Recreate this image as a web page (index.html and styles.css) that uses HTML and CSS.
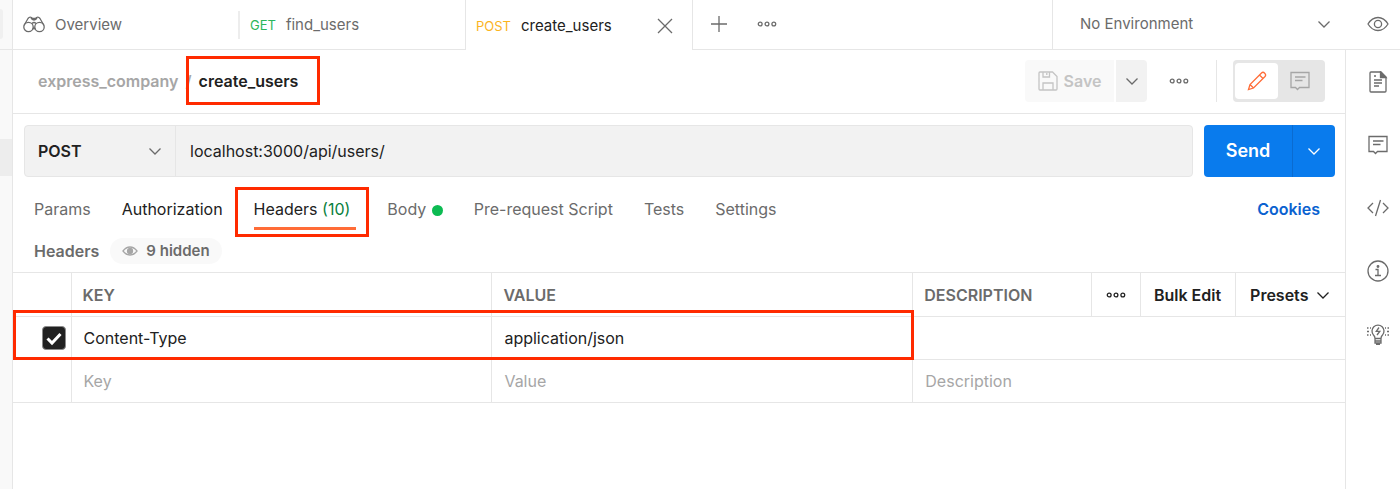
FILE: index.html
```html
<!DOCTYPE html>
<html lang="en">
	<head>
		<meta charset="UTF-8">
		<meta name="viewport" content="width=device-width, initial-scale=1">
		<title>create_users</title>
		<link rel="stylesheet" href="styles.css">
	</head>
	<body>
		<!-- shared icons -->
		<svg class="sprite" aria-hidden="true">
			<symbol id="chevron" viewBox="0 0 14 14">
				<path d="M1.500 4.500 7 10l5.500-5.500"/>
			</symbol>
			<symbol id="dots" viewBox="0 0 20 8">
				<circle cx="3.200" cy="4" r="1.900"/>
				<circle cx="10" cy="4" r="1.900"/>
				<circle cx="16.800" cy="4" r="1.900"/>
			</symbol>
			<symbol id="comment" viewBox="0 0 20 20">
				<path d="M1 1.500h18v15H9.500L7.500 18.500 5.500 16.500H1zM5 6h10.500M5 9.500h7.500"/>
			</symbol>
		</svg>

		<div class="edge">
			<div class="edge-top"><span class="edge-button"></span></div>
			<div class="edge-item"></div>
		</div>

		<div class="workspace">
			<header class="tabbar">
				<button class="tab">
					<svg class="icon" width="22" height="20" viewBox="0 0 22 20">
						<circle cx="5.500" cy="12" r="4.700"/>
						<circle cx="16.500" cy="12" r="4.700"/>
						<path d="M1 10.500 5 3.500Q6.500 1.500 8.500 2.500L9.500 3.500H12.500L13.500 2.500Q15.500 1.500 17 3.500L21 10.500M9 8.500Q11 6.500 13 8.500M8 3Q9 5 11 5T14 3M9.500 14.500 11 12.500 12.500 14.500"/>
					</svg>
					<span class="tab-name">Overview</span>
				</button>
				<span class="tab-divider"></span>
				<button class="tab">
					<span class="method get">GET</span>
					<span class="tab-name">find_users</span>
				</button>
				<div class="tab active">
					<button class="tab-label">
						<span class="method post">POST</span>
						<span class="tab-name">create_users</span>
					</button>
					<button class="icon-button" aria-label="Close tab">
						<svg class="icon" width="16" height="16" viewBox="0 0 16 16"><path d="M1 1l14 14M15 1 1 15"/></svg>
					</button>
				</div>
				<button class="icon-button add" aria-label="New tab">
					<svg class="icon" width="16" height="16" viewBox="0 0 16 16"><path d="M8 0v16M0 8h16"/></svg>
				</button>
				<button class="icon-button" aria-label="Tab options">
					<svg class="icon" width="20" height="8"><use href="#dots"/></svg>
				</button>
				<label class="picker environment">
					<select aria-label="Environment">
						<option>No Environment</option>
					</select>
					<svg class="icon" width="14" height="14"><use href="#chevron"/></svg>
				</label>
				<button class="icon-button eye" aria-label="Environment quick look">
					<svg class="icon" width="22" height="16" viewBox="0 0 22 16">
						<path d="M1 8Q5 1.500 11 1.500T21 8Q17 14.500 11 14.500T1 8z"/>
						<circle cx="11" cy="8" r="3.600"/>
					</svg>
				</button>
			</header>

			<div class="content">
				<main>
					<div class="title-row">
						<h1 class="breadcrumb">
							<a href="#">express_company</a>
							<span class="slash">/</span>
							<span class="marked current">create_users</span>
						</h1>
						<div class="save">
							<button class="save-button" disabled>
								<svg class="icon" width="20" height="20" viewBox="0 0 20 20">
									<path d="M2 1h12.500L19 5.500V18q0 1-1 1H2q-1 0-1-1V2q0-1 1-1zM5 1v5h6.500V1M8.800 2v2M5 19v-7h10v7"/>
								</svg>
								Save
							</button>
							<button class="save-more" aria-label="Save options">
								<svg class="icon" width="14" height="14"><use href="#chevron"/></svg>
							</button>
						</div>
						<button class="icon-button" aria-label="More actions">
							<svg class="icon" width="20" height="8"><use href="#dots"/></svg>
						</button>
						<div class="mode">
							<div class="mode-switch">
								<button class="on" aria-label="Edit">
									<svg class="icon" width="20" height="20" viewBox="0 0 20 20">
										<path d="M1.500 18.500 3 13.500 14.500 2Q16 .500 17.700 2.200T18 5.500L6.500 17zM3 13.500 6.500 17M12.500 4 16 7.500"/>
									</svg>
								</button>
								<button aria-label="Comments">
									<svg class="icon" width="20" height="20"><use href="#comment"/></svg>
								</button>
							</div>
						</div>
					</div>

					<div class="request-row">
						<div class="request">
							<label class="picker verb">
								<select aria-label="Method">
									<option>POST</option>
								</select>
								<svg class="icon" width="14" height="14"><use href="#chevron"/></svg>
							</label>
							<input class="url" aria-label="Request URL" value="localhost:3000/api/users/">
						</div>
						<div class="send">
							<button class="send-button">Send</button>
							<button class="send-more" aria-label="Send options">
								<svg class="icon" width="14" height="14"><use href="#chevron"/></svg>
							</button>
						</div>
					</div>

					<nav class="sections">
						<a href="#">Params</a>
						<a href="#" class="dark">Authorization</a>
						<a href="#" class="marked dark selected">Headers <span class="count">(10)</span></a>
						<a href="#">Body <span class="dot"></span></a>
						<a href="#">Pre-request Script</a>
						<a href="#">Tests</a>
						<a href="#">Settings</a>
						<a href="#" class="cookies">Cookies</a>
					</nav>

					<div class="headers-row">
						<h2>Headers</h2>
						<button class="pill">
							<svg class="icon" width="16" height="10" viewBox="0 0 16 10">
								<path d="M1 5Q4 1 8 1T15 5Q12 9 8 9T1 5z"/>
								<circle class="pupil" cx="8" cy="5" r="2.500"/>
							</svg>
							9 hidden
						</button>
					</div>

					<div class="table-wrap">
						<table>
							<colgroup>
								<col class="col-check">
								<col class="col-wide">
								<col class="col-wide">
								<col>
								<col class="col-dots">
								<col class="col-bulk">
								<col class="col-presets">
							</colgroup>
							<thead>
								<tr>
									<td></td>
									<th>KEY</th>
									<th>VALUE</th>
									<th>DESCRIPTION</th>
									<td><button class="icon-button" aria-label="Column options"><svg class="icon" width="20" height="8"><use href="#dots"/></svg></button></td>
									<td><button class="head-button">Bulk Edit</button></td>
									<td><button class="head-button">Presets <svg class="icon" width="14" height="14"><use href="#chevron"/></svg></button></td>
								</tr>
							</thead>
							<tbody>
								<tr>
									<td>
										<label class="check">
											<input type="checkbox" aria-label="Enable header" checked>
											<svg width="24" height="24" viewBox="0 0 24 24"><path d="M5.500 12.500 10 17 18.500 8"/></svg>
										</label>
									</td>
									<td><input aria-label="Key" value="Content-Type"></td>
									<td><input aria-label="Value" value="application/json"></td>
									<td colspan="4"><input aria-label="Description"></td>
								</tr>
								<tr>
									<td></td>
									<td><input aria-label="New key" placeholder="Key"></td>
									<td><input aria-label="New value" placeholder="Value"></td>
									<td colspan="4"><input aria-label="New description" placeholder="Description"></td>
								</tr>
							</tbody>
						</table>
						<div class="row-mark"></div>
					</div>
				</main>

				<aside class="rail">
					<button class="icon-button" aria-label="Documentation">
						<svg class="icon" width="22" height="22" viewBox="0 0 22 22">
							<path d="M4 1h10l5 5v14q0 1-1 1H4q-1 0-1-1V2q0-1 1-1zM7 5h2M7 9h8M7 12h8M7 15h5"/>
							<path class="solid" d="M13.500 1v5.500H19z"/>
						</svg>
					</button>
					<button class="icon-button" aria-label="Comments">
						<svg class="icon" width="20" height="20"><use href="#comment"/></svg>
					</button>
					<button class="icon-button" aria-label="Code snippet">
						<svg class="icon" width="22" height="18" viewBox="0 0 22 18"><path d="M6 4 1 9l5 5M16 4l5 5-5 5M13.500 1 8.500 17"/></svg>
					</button>
					<button class="icon-button" aria-label="Request details">
						<svg class="icon" width="22" height="22" viewBox="0 0 22 22">
							<circle cx="11" cy="11" r="10"/>
							<path d="M8.500 9.500H11V15.500M8 15.500h6"/>
							<circle class="solid" cx="11" cy="6.500" r=".8"/>
						</svg>
					</button>
					<button class="icon-button" aria-label="Tips">
						<svg class="icon" width="22" height="22" viewBox="0 0 22 22">
							<path d="M8 15.500Q8 13.500 6.500 12A6 6 0 1 1 15.500 12Q14 13.500 14 15.500zM8 15.500V20h6v-4.500M8 18h6M9 21.300h4M12 4.500 9.300 8.300h3.500L10 12"/>
							<path d="M0 5h1.500M3 5h1M0 8.500h2M0 12h1.500M3 12h1M20.500 5H22M18 5h1M20 8.500h2M20.500 12H22M18 12h1"/>
						</svg>
					</button>
				</aside>
			</div>
		</div>
	</body>
</html>
```
FILE: styles.css
```css
*, *::before, *::after {
	box-sizing: border-box;
}

html, body {
	margin: 0;
	padding: 0;
	height: 100%;
}

body {
	display: flex;
	background: #fff;
	color: #212121;
	font-family: Inter, "Liberation Sans", sans-serif;
	font-size: 16px;
	line-height: 20px;
}

button, input, select {
	margin: 0;
	padding: 0;
	border: 0;
	background: none;
	color: inherit;
	font: inherit;
}

button {
	display: flex;
	align-items: center;
	justify-content: center;
}

a {
	color: inherit;
	text-decoration: none;
}

.sprite {
	position: absolute;
	width: 0;
	height: 0;
}

.icon {
	flex: none;
	fill: none;
	stroke: currentColor;
	stroke-width: 1.3;
}

.icon .solid {
	fill: currentColor;
}

.icon-button {
	color: #6b6b6b;
}

/* select with its own arrow on top */
.picker {
	display: grid;
	align-items: center;
}

.picker > select,
.picker > .icon {
	grid-area: 1 / 1;
}

.picker > select {
	width: 100%;
	height: 100%;
	appearance: none;
}

.picker > .icon {
	justify-self: end;
	pointer-events: none;
}

/* left edge */
.edge {
	flex: none;
	width: 13px;
	background: #f9f9f9;
	border-right: 1px solid #e6e6e6;
}

.edge-top {
	height: 50px;
	padding-top: 9px;
	border-bottom: 1px solid #e6e6e6;
}

.edge-button {
	display: block;
	width: 3px;
	height: 30px;
	background: #f0f0f0;
	border-radius: 0 4px 4px 0;
}

.edge-item {
	height: 37px;
	margin-top: 89px;
	background: #ededed;
}

.workspace {
	display: flex;
	flex-direction: column;
	flex-grow: 1;
	min-width: 0;
}

/* tab bar */
.tabbar {
	display: flex;
	align-items: center;
	height: 50px;
	border-bottom: 1px solid #e6e6e6;
	color: #6b6b6b;
	font-size: 15px;
}

.tabbar > .icon-button {
	padding-bottom: 2px;
}

.tab {
	display: flex;
	align-items: center;
	justify-content: flex-start;
	gap: 10px;
	width: 225px;
	height: 50px;
	padding: 1px 10px 0;
}

.tab-divider {
	width: 2px;
	height: 28px;
	background: #ededed;
}

.tab.active {
	justify-content: space-between;
	width: 228px;
	padding-right: 19px;
	margin-bottom: -1px;
	background: #fff;
	border: solid #e6e6e6;
	border-width: 0 1px;
}

.tab-label {
	gap: 10px;
}

.active .tab-name {
	color: #212121;
}

.method {
	font-size: 13px;
}

.get {
	color: #2bb65b;
}

.post {
	color: #fbb41f;
}

.add {
	margin: 0 30px 0 18px;
}

.environment {
	width: 303px;
	height: 49px;
	margin-left: auto;
	padding: 0 24px 2px 27px;
	border-left: 1px solid #e6e6e6;
}

.eye {
	width: 45px;
}

.content {
	display: flex;
	flex-grow: 1;
}

main {
	flex-grow: 1;
	min-width: 0;
}

/* red annotation frames */
.marked {
	position: relative;
}

.marked::before {
	content: "";
	position: absolute;
	inset: -15px -22px -14px -13px;
	border: 3px solid #ff2a00;
}

.row-mark {
	position: absolute;
	top: 38px;
	left: 0;
	width: calc(63% + 62px);
	height: 50px;
	border: 3px solid #ff2a00;
	pointer-events: none;
}

/* title and actions */
.title-row {
	display: flex;
	align-items: center;
	height: 64px;
	padding: 0 20px 2px 25px;
	border-bottom: 1px solid #e6e6e6;
}

.breadcrumb {
	display: flex;
	gap: 7px;
	margin: 0 auto 0 0;
	color: #a6a6a6;
	font-size: 16px;
	font-weight: 600;
}

.current {
	color: #212121;
}

.save {
	display: flex;
	gap: 2px;
	height: 42px;
	margin-right: 22px;
}

.save-button {
	gap: 6px;
	width: 89px;
	background: #f9f9f9;
	border-radius: 4px 0 0 4px;
	color: #c4c4c4;
	font-weight: 600;
}

.save-more {
	width: 31px;
	background: #f2f2f2;
	border-radius: 0 4px 4px 0;
	color: #6b6b6b;
}

.mode {
	height: 42px;
	margin-left: 27px;
	padding-left: 16px;
	border-left: 1px solid #e6e6e6;
}

.mode-switch {
	display: flex;
	width: 92px;
	height: 42px;
	padding: 3px 4px 3px 2px;
	background: #e6e6e6;
	border-radius: 4px;
	color: #a6a6a6;
}

.mode-switch > button {
	flex: 1;
	border-radius: 4px;
}

.mode-switch > .on {
	background: #fff;
	color: #ff6c37;
}

/* method, url, send */
.request-row {
	display: flex;
	gap: 11px;
	height: 52px;
	margin: 11px 10px 0 11px;
}

.request {
	display: flex;
	flex-grow: 1;
	background: #f2f2f2;
	border: 1px solid #e6e6e6;
	border-radius: 4px;
}

.verb {
	width: 151px;
	padding: 0 13px;
	border-right: 1px solid #e6e6e6;
	font-weight: 600;
}

.verb > .icon {
	color: #6b6b6b;
}

.url {
	flex-grow: 1;
	padding: 0 14px;
}

.send {
	display: flex;
	color: #fff;
	background: #097bed;
	border-radius: 4px;
}

.send-button {
	width: 88px;
	font-size: 18px;
	font-weight: 600;
}

.send-more {
	width: 43px;
	border-left: 1px solid #0a6bd0;
}

/* request sections */
.sections {
	display: flex;
	gap: 31px;
	margin-top: 22px;
	padding: 0 25px 0 21px;
	color: #6b6b6b;
}

.dark {
	color: #212121;
}

.selected {
	padding-right: 6px;
}

.selected::before {
	inset: -12px -13px -18px -19px;
}

.selected::after {
	content: "";
	position: absolute;
	inset: auto 0 -11px;
	height: 3px;
	background: #ff6c37;
}

.count {
	color: #0a7f3d;
}

.dot {
	display: inline-block;
	width: 11px;
	height: 11px;
	margin-left: 1px;
	background: #0cbb52;
	border-radius: 50%;
	vertical-align: -1px;
}

.cookies {
	margin-left: auto;
	color: #0a62d0;
	font-weight: 600;
}

.headers-row {
	display: flex;
	align-items: center;
	gap: 11px;
	height: 26px;
	margin: 19px 0 8px 21px;
	color: #6b6b6b;
	font-size: 15px;
}

h2 {
	margin: 0;
	font-size: 16px;
	font-weight: 600;
}

.pill {
	gap: 8px;
	height: 26px;
	padding: 0 12px;
	background: #f9f9f9;
	border-radius: 13px;
	font-weight: 600;
}

.pill > .icon {
	color: #a6a6a6;
}

.pupil {
	fill: #a6a6a6;
}

/* headers table */
.table-wrap {
	position: relative;
}

table {
	width: 100%;
	table-layout: fixed;
	border-collapse: collapse;
}

.col-check {
	width: 58px;
}

.col-wide {
	width: 31.6%;
}

.col-dots {
	width: 49px;
}

.col-bulk {
	width: 95px;
}

.col-presets {
	width: 110px;
}

th, td {
	height: 43px;
	padding: 0;
	border: 1px solid #e6e6e6;
	border-width: 1px 0 1px 1px;
}

thead td, th {
	height: 44px;
}

tr > :first-child {
	border-left: 0;
}

th {
	padding-left: 11px;
	color: #6b6b6b;
	font-weight: 600;
	text-align: left;
}

td > input {
	display: block;
	width: 100%;
	padding: 0 12px;
}

td > input::placeholder {
	color: #a6a6a6;
	opacity: 1;
}

td > button {
	width: 100%;
}

thead .icon-button {
	color: #212121;
}

.head-button {
	gap: 8px;
	font-weight: 600;
}

.check {
	display: grid;
	width: 24px;
	height: 24px;
	margin-left: 29px;
}

.check > * {
	grid-area: 1 / 1;
}

.check > input {
	width: 24px;
	height: 24px;
	appearance: none;
	background: #212121;
	border: 1px solid #8a8a8a;
	border-radius: 4px;
}

.check > svg {
	fill: none;
	stroke: #fff;
	stroke-width: 3;
	pointer-events: none;
}

/* right icon rail */
.rail {
	display: flex;
	flex-direction: column;
	align-items: center;
	flex: none;
	gap: 41px;
	width: 55px;
	padding: 21px 0 0 9px;
	border-left: 1px solid #e6e6e6;
}

.rail > .icon-button {
	height: 22px;
}
```
